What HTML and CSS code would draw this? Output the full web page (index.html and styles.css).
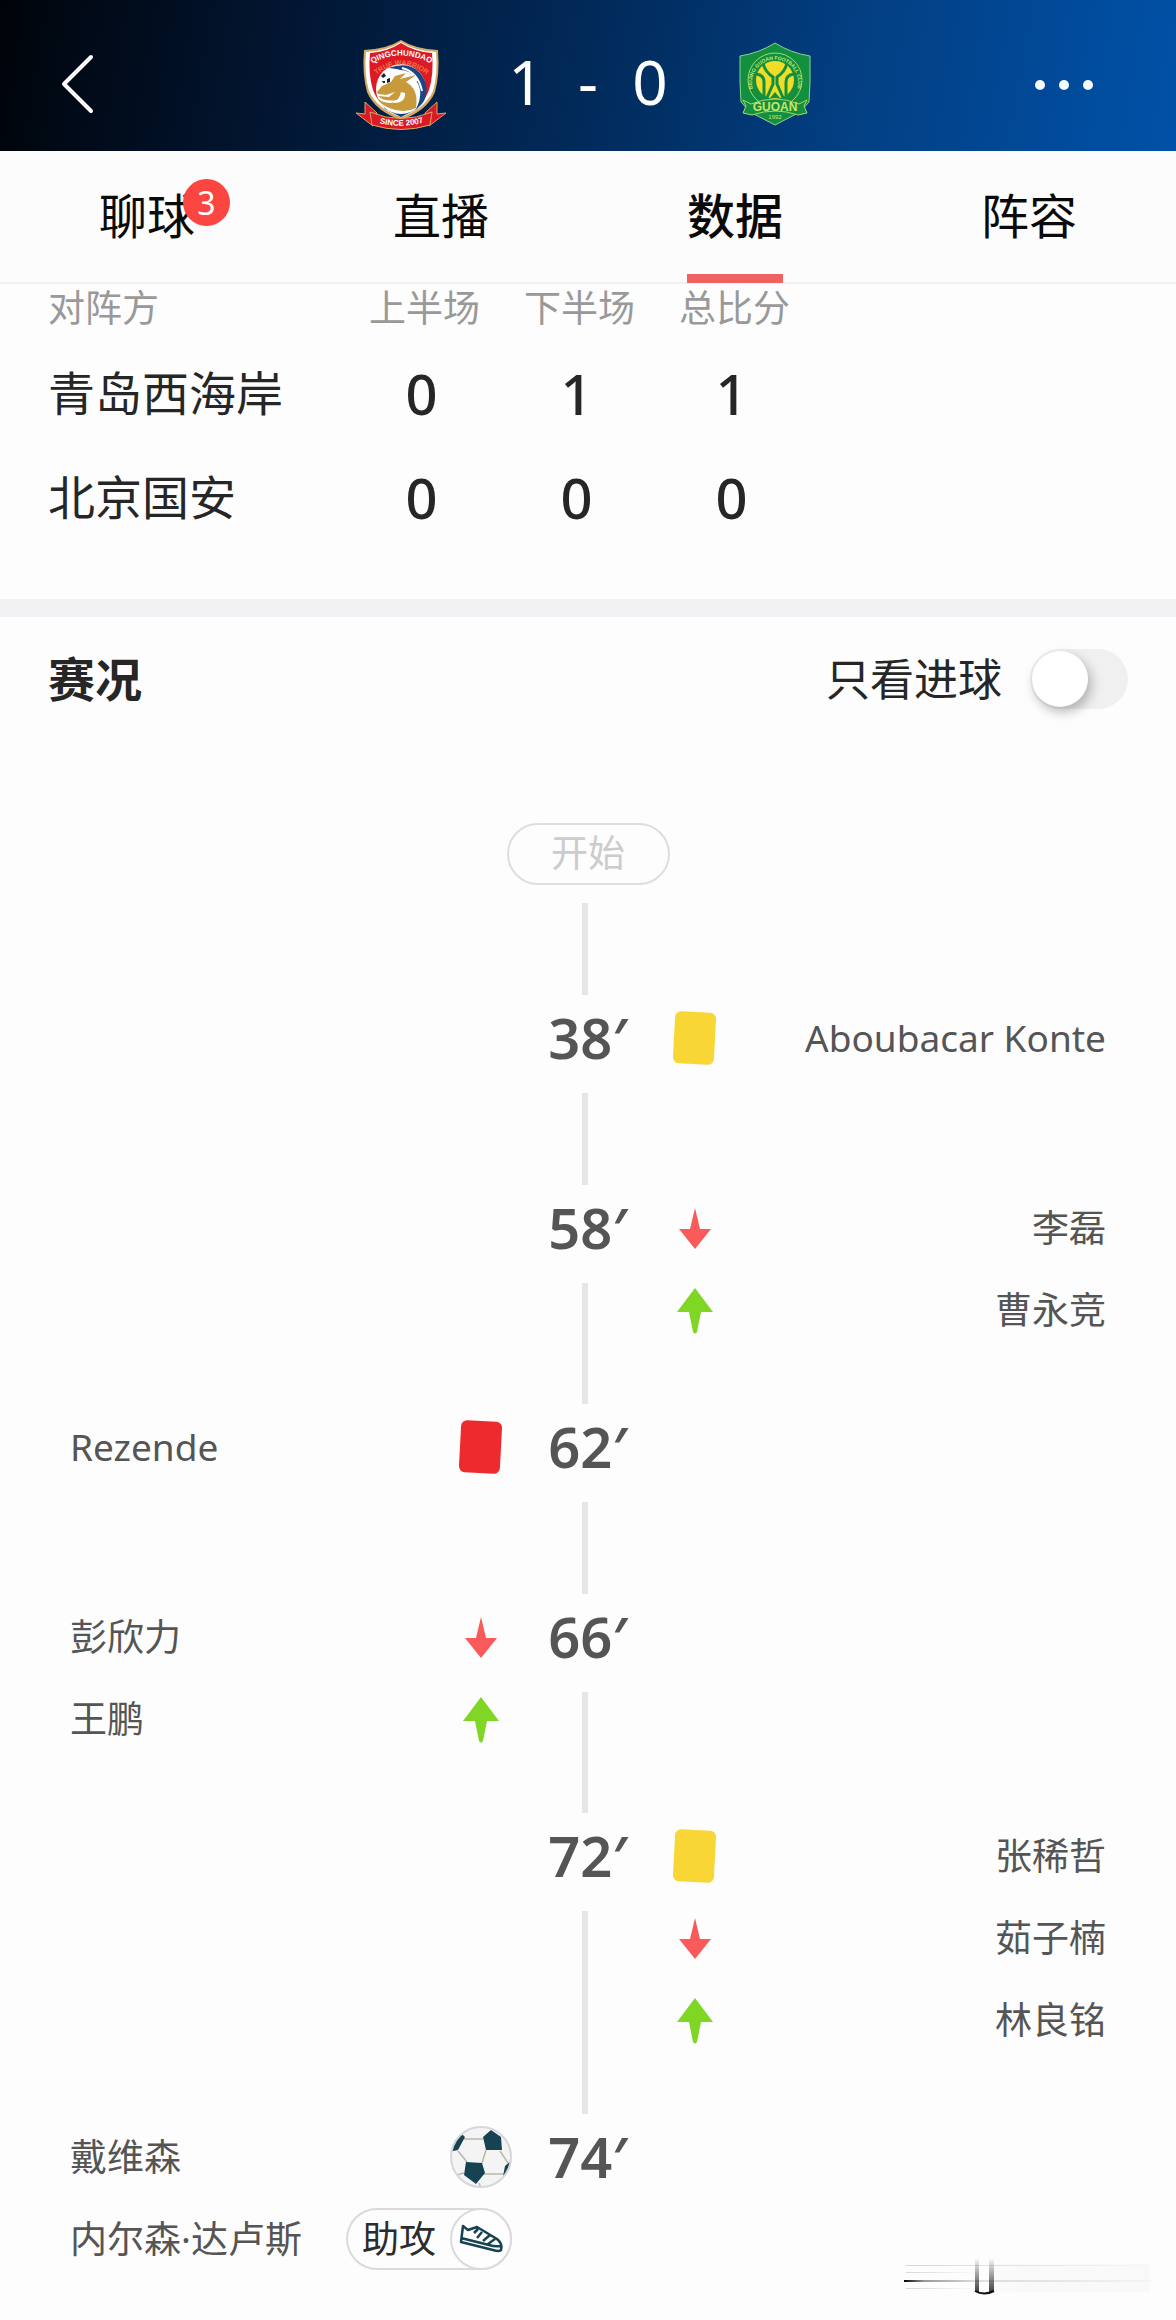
FILE: index.html
```html
<!DOCTYPE html>
<html lang="zh-CN">
<head>
<meta charset="utf-8">
<meta name="viewport" content="width=device-width, initial-scale=1">
<title>青岛西海岸 1 - 0 北京国安</title>
<link rel="stylesheet" href="styles.css">
</head>
<body>
<svg class="defs" aria-hidden="true">
  <symbol id="card" viewBox="0 0 62 62"><rect x="10" y="5" width="41" height="52" rx="6" transform="rotate(3 31 31)" fill="currentColor"/></symbol>
  <symbol id="down" viewBox="0 0 62 62"><path d="M31 11L36 32H47L31 52L15 32H26Z" fill="#fa5a5a"/></symbol>
  <symbol id="up" viewBox="0 0 62 62"><path d="M31 9L49 33H37L33 53Q31 56 29 53L25 33H13Z" fill="#80d624"/></symbol>
</svg>

<header class="topbar">
  <button class="icon-btn" type="button" aria-label="返回">
    <svg width="40" height="64" viewBox="0 0 40 64"><path d="M33 4L6 31L33 58" fill="none" stroke="#fff" stroke-width="4" stroke-linecap="round" stroke-linejoin="round"/></svg>
  </button>
  <div class="scoreline">
    <svg class="crest" viewBox="0 0 92 92" role="img" aria-label="青岛西海岸">
      <defs>
        <path id="arcA" d="M18 24Q46 9 75 24"/>
        <path id="arcB" d="M20 37Q46 15 73 37"/>
        <path id="arcC" d="M20 83Q46 91 73 82"/>
      </defs>
      <path d="M46 1Q60 10 83 11Q85 35 80 53Q72 72 46 81Q20 72 12 53Q7 35 9 11Q32 10 46 1Z" fill="#d3a965"/>
      <path d="M46 3Q60 12 81 13Q83 35 78 52Q70 70 46 78Q22 70 14 52Q9 35 11 13Q32 12 46 3Z" fill="#fff"/>
      <path d="M46 4Q60 13 77 14Q79 35 74 51Q68 68 46 77Q24 68 18 51Q13 35 15 14Q32 13 46 4Z" fill="#dc1a26"/>
      <path d="M23 60Q46 82 69 60L62 70L46 78L30 70Z" fill="#173d7a"/>
      <circle cx="46" cy="50" r="25" fill="#fff"/>
      <path d="M33 29Q62 19 71 45Q74 62 61 70Q69 54 62 43Q53 30 33 29Z" fill="#1b4685"/>
      <path d="M39 32Q55 30 62 42M47 29Q63 33 67 52" fill="none" stroke="#fff" stroke-width="2"/>
      <path d="M22 53L27 47L36 43L40 37L51 34L45 40L61 36L51 43Q64 50 61 69Q49 75 34 69Q25 65 22 59Q31 67 44 62Q46 60 42 61Q29 63 23 57L34 58L40 53L31 56L23 55Z" fill="#c99a3c"/>
      <path d="M46 53Q45 60 38 64Q51 64 50 54Z" fill="#fff"/>
      <circle cx="30" cy="39" r="5" fill="#fff"/>
      <path d="M26 37l3-3 2 3-3 2zM32 40l3-1 0 4-3 1zM27 42l3 0 0 2-2 0z" fill="#152238"/>
      <path d="M10 63L22 74L18 87L1 74L10 75ZM82 63L70 74L74 87L91 74L82 75Z" fill="#dc1a26" stroke="#d3a965"/>
      <path d="M15 73Q46 86 77 73L75 86Q46 95 17 86Z" fill="#dc1a26" stroke="#d3a965"/>
      <g font-family="Liberation Sans, sans-serif" font-weight="700">
        <text font-size="8" fill="#fff"><textPath href="#arcA" startOffset="50%" text-anchor="middle">QINGCHUNDAO</textPath></text>
        <text font-size="7" fill="#ee7440"><textPath href="#arcB" startOffset="50%" text-anchor="middle">TRUE WARRIOR</textPath></text>
        <text font-size="8" fill="#fff"><textPath href="#arcC" startOffset="50%" text-anchor="middle">SINCE 2007</textPath></text>
      </g>
    </svg>
    <div class="score"><span>1</span><span>-</span><span>0</span></div>
    <svg class="crest" viewBox="0 0 92 92" role="img" aria-label="北京国安">
      <defs><path id="arcD" d="M26 55A23 23 0 1 1 66 55"/></defs>
      <path d="M46 4Q62 14 81 17V44L80 63L71 73L46 86L21 73L12 63L11 44V17Q30 14 46 4Z" fill="#129040" stroke="#8fd08f"/>
      <circle cx="46" cy="41" r="27" fill="#129040" stroke="#a8d765"/>
      <circle cx="46" cy="41" r="19" fill="#f1dc27"/>
      <path d="M34 24Q36 33 44 38V45L37 61M58 24Q56 33 48 38V45L55 61M27 35Q35 36 35 43V59M65 35Q57 36 57 43V59" fill="none" stroke="#129040" stroke-width="3"/>
      <path d="M41 59L46 53L51 59Z" fill="#129040"/>
      <path d="M14 61L22 65Q46 55 70 65L78 61L75 67L78 74L69 76Q46 68 23 76L14 74L17 67Z" fill="#129040" stroke="#a8d765"/>
      <g font-family="Liberation Sans, sans-serif" fill="#c9e56a">
        <text font-size="5" font-weight="700"><textPath href="#arcD" startOffset="50%" text-anchor="middle">BEIJING GUOAN FOOTBALL CLUB</textPath></text>
        <text x="46" y="72" font-size="12" font-weight="700" text-anchor="middle">GUOAN</text>
        <text x="46" y="80" font-size="6" text-anchor="middle">1992</text>
      </g>
    </svg>
  </div>
  <button class="icon-btn more" type="button" aria-label="更多">
    <svg width="60" height="20" viewBox="0 0 60 20"><g fill="#f3f8ff"><circle cx="6" cy="10" r="5"/><circle cx="30" cy="10" r="5"/><circle cx="54" cy="10" r="5"/></g></svg>
  </button>
</header>

<nav class="tabs">
  <a href="#chat"><span class="tab-label">聊球<span class="badge">3</span></span></a>
  <a href="#live"><span class="tab-label">直播</span></a>
  <a href="#data" class="active" aria-current="page"><span class="tab-label">数据</span></a>
  <a href="#lineup"><span class="tab-label">阵容</span></a>
</nav>

<main>
  <section class="halves">
    <table>
      <thead><tr><th>对阵方</th><th>上半场</th><th>下半场</th><th>总比分</th></tr></thead>
      <tbody>
        <tr><th scope="row">青岛西海岸</th><td>0</td><td>1</td><td>1</td></tr>
        <tr><th scope="row">北京国安</th><td>0</td><td>0</td><td>0</td></tr>
      </tbody>
    </table>
  </section>

  <section class="events">
    <div class="events-head">
      <h2>赛况</h2>
      <label class="only-goals">只看进球<input type="checkbox" role="switch"></label>
    </div>
    <div class="kickoff"><span class="pill">开始</span><i class="line"></i></div>
    <ol class="timeline">
      <li class="event away">
        <div class="middle"><time>38′</time><i class="line"></i></div>
        <ul>
          <li><svg class="ico yellow" role="img" aria-label="黄牌"><use href="#card"/></svg><span>Aboubacar Konte</span></li>
        </ul>
      </li>
      <li class="event away">
        <div class="middle"><time>58′</time><i class="line"></i></div>
        <ul>
          <li><svg class="ico" role="img" aria-label="换下"><use href="#down"/></svg><span>李磊</span></li>
          <li><svg class="ico" role="img" aria-label="换上"><use href="#up"/></svg><span>曹永竞</span></li>
        </ul>
      </li>
      <li class="event home">
        <div class="middle"><time>62′</time><i class="line"></i></div>
        <ul>
          <li><span>Rezende</span><svg class="ico red" role="img" aria-label="红牌"><use href="#card"/></svg></li>
        </ul>
      </li>
      <li class="event home">
        <div class="middle"><time>66′</time><i class="line"></i></div>
        <ul>
          <li><span>彭欣力</span><svg class="ico" role="img" aria-label="换下"><use href="#down"/></svg></li>
          <li><span>王鹏</span><svg class="ico" role="img" aria-label="换上"><use href="#up"/></svg></li>
        </ul>
      </li>
      <li class="event away">
        <div class="middle"><time>72′</time><i class="line"></i></div>
        <ul>
          <li><svg class="ico yellow" role="img" aria-label="黄牌"><use href="#card"/></svg><span>张稀哲</span></li>
          <li><svg class="ico" role="img" aria-label="换下"><use href="#down"/></svg><span>茹子楠</span></li>
          <li><svg class="ico" role="img" aria-label="换上"><use href="#up"/></svg><span>林良铭</span></li>
        </ul>
      </li>
      <li class="event home">
        <div class="middle"><time>74′</time></div>
        <ul>
          <li><span>戴维森</span>
            <svg class="ico" viewBox="0 0 62 62" role="img" aria-label="进球">
              <defs><clipPath id="ballClip"><circle cx="31" cy="31" r="29"/></clipPath></defs>
              <circle cx="31" cy="31" r="30" fill="#f4f4f5" stroke="#d6d7da" stroke-width="2"/>
              <g clip-path="url(#ballClip)">
                <path d="M14 13H33M8 25L17 36M36 24L32 37M50 25L58 37M34 48H53M29 57L31 62M14 47L6 49" fill="none" stroke="#b9b9a6" stroke-width="1.5"/>
                <path d="M33 11L41 4L51 11L52 24H36ZM16 36L32 37L35 47L26 58L14 49ZM-2 26L3 12L12 8L15 11L8 24ZM53 50L55 40L62 34V50L54 53Z" fill="#164252"/>
              </g>
            </svg>
          </li>
          <li><span>内尔森·达卢斯</span>
            <span class="assist">助攻
              <svg class="ico" viewBox="0 0 62 62" aria-hidden="true">
                <circle cx="31" cy="31" r="30" fill="#fefefe" stroke="#dadadc" stroke-width="2"/>
                <path d="M13 18L18 22L27 19L47 31Q53 36 51 42Q49 44 43 42L11 34ZM11 30L39 37Q45 39 51 38M28 21L24 25M32 24L27 30M40 27L33 33M45 31L38 36" fill="none" stroke="#164252" stroke-width="2.5" stroke-linejoin="round"/>
              </svg>
            </span>
          </li>
        </ul>
      </li>
    </ol>
  </section>
</main>

<svg class="watermark" width="248" height="44" viewBox="0 0 248 44" aria-hidden="true">
  <defs>
    <linearGradient id="fadeX"><stop offset="0" stop-color="#000"/><stop offset=".08" stop-color="#000" stop-opacity=".4"/><stop offset=".3" stop-color="#000" stop-opacity=".12"/><stop offset="1" stop-color="#000" stop-opacity=".02"/></linearGradient>
    <linearGradient id="fadeY" x2="0" y2="1"><stop offset="0" stop-color="#000" stop-opacity="0"/><stop offset="1" stop-color="#000" stop-opacity=".75"/></linearGradient>
    <linearGradient id="faint"><stop offset="0" stop-color="#000" stop-opacity=".15"/><stop offset="1" stop-color="#000" stop-opacity=".01"/></linearGradient>
  </defs>
  <rect x="0" y="20" width="248" height="2" fill="url(#fadeX)"/>
  <g fill="url(#faint)"><rect x="2" y="5" width="240" height="1"/><rect x="2" y="12" width="70" height="1"/><rect x="2" y="28" width="70" height="1"/></g>
  <g fill="#000" opacity=".012"><rect x="90" y="4" width="156" height="28"/><rect x="130" y="6" width="20" height="26"/><rect x="170" y="6" width="30" height="26"/><rect x="225" y="6" width="12" height="26"/></g>
  <rect x="71" y="-2" width="4" height="34" fill="url(#fadeY)"/>
  <rect x="85" y="-2" width="5" height="34" fill="url(#fadeY)"/>
  <path d="M71 31Q80 36 90 31" fill="none" stroke="#111" stroke-width="2"/>
</svg>
</body>
</html>
```
FILE: styles.css
```css
* { box-sizing: border-box; }

body {
  position: relative;
  min-height: 100vh;
  margin: 0;
  background: #fdfdfd;
  color: #262626;
  font-family: "Noto Sans", "Noto Sans CJK SC", sans-serif;
  line-height: 1.2;
}

ol, ul { margin: 0; padding: 0; list-style: none; }
.defs { display: none; }

/* score header */
.topbar {
  display: grid;
  grid-template-columns: 1fr auto 1fr;
  align-items: center;
  height: 151px;
  padding: 18px 58px 0;
  background: linear-gradient(100deg, #00040a 0%, #02142e 22%, #012a5a 50%, #033f82 72%, #0051a8 100%);
}
.icon-btn {
  display: flex;
  justify-self: start;
  padding: 0;
  border: 0;
  background: none;
}
.icon-btn.more { justify-self: end; padding-right: 24px; }
.scoreline { display: flex; align-items: center; gap: 48px; }
.crest { width: 92px; height: 92px; }
.score { display: flex; padding-bottom: 8px; color: #fff; font-size: 62px; line-height: 72px; }
.score span { width: 62px; text-align: center; }

/* tabs */
.tabs {
  display: flex;
  height: 133px;
  border-bottom: 2px solid #eff1f2;
  background: #fcfcfd;
}
.tabs a {
  display: flex;
  flex: 1;
  justify-content: center;
  color: #0a0a0a;
  font-size: 48px;
  line-height: 130px;
  text-decoration: none;
}
.tab-label { position: relative; height: 132px; }
.active .tab-label { border-bottom: 9px solid #ed6262; font-weight: 500; }
.badge {
  position: absolute;
  top: 28px;
  left: 84px;
  width: 47px;
  height: 47px;
  border-radius: 50%;
  background: #fb4540;
  color: #fff;
  font-size: 32px;
  line-height: 47px;
  text-align: center;
}

/* half-time table */
.halves { padding: 0 48px 50px; border-bottom: 18px solid #f2f2f4; }
table { width: 764px; max-width: 100%; border-collapse: collapse; table-layout: fixed; }
th, td { padding: 0; font-weight: 400; text-align: center; }
th:first-child { width: 299px; text-align: left; }
thead th { height: 57px; color: #999; font-size: 37px; line-height: 48px; vertical-align: top; }
tbody tr { height: 104px; }
tbody th { font-size: 47px; }
td { padding-right: 6px; font-size: 56px; font-weight: 500; line-height: 64px; }

/* events */
.events-head {
  display: flex;
  align-items: center;
  justify-content: space-between;
  height: 124px;
  padding: 0 48px;
}
h2 { margin: 0; font-size: 47px; font-weight: 700; }
.only-goals { display: flex; align-items: center; gap: 28px; font-size: 44px; }
.only-goals input {
  width: 98px;
  height: 60px;
  margin: 0;
  padding: 2px;
  border-radius: 30px;
  background: #f0f0f1;
  appearance: none;
}
.only-goals input::before {
  display: block;
  width: 56px;
  height: 56px;
  border-radius: 50%;
  background: #fff;
  box-shadow: 3px 5px 12px rgb(0 0 0 / 28%);
  content: "";
}
.only-goals input:checked { background: #ed6262; }
.only-goals input:checked::before { margin-left: 38px; }

.kickoff {
  display: flex;
  flex-direction: column;
  align-items: center;
  gap: 18px;
  padding-top: 82px;
}
.pill {
  width: 163px;
  height: 62px;
  border: 2px solid #dedede;
  border-radius: 31px;
  color: #ccc;
  font-size: 37px;
  line-height: 56px;
  text-align: center;
}
.line { width: 6px; min-height: 92px; margin-right: 6px; background: #e6e6e6; }

.event {
  display: grid;
  grid-template-columns: 1fr 152px 1fr;
  padding: 0 70px;
  color: #555;
}
.middle {
  display: flex;
  grid-area: 1 / 2;
  flex-direction: column;
  align-items: center;
}
.middle .line { flex: 1; }
time { height: 98px; font-size: 56px; font-weight: 600; line-height: 84px; }
.event ul { padding: 2px 0 53px; font-size: 37px; }
.event:last-child ul { padding-bottom: 40px; }
.home ul { grid-area: 1 / 1; }
.away ul { grid-area: 1 / 3; }
.event ul li {
  display: flex;
  align-items: center;
  justify-content: space-between;
  height: 82px;
  white-space: nowrap;
}
.ico { flex: none; width: 62px; height: 62px; }
.yellow { color: #f7d636; }
.red { color: #ed2b2e; }
.assist {
  display: flex;
  align-items: center;
  gap: 14px;
  height: 62px;
  padding-left: 16px;
  border-radius: 31px;
  box-shadow: inset 0 0 0 2px #dadadc;
  color: #2c2c2c;
}

.watermark { position: absolute; right: 24px; bottom: 16px; overflow: visible; }
```
